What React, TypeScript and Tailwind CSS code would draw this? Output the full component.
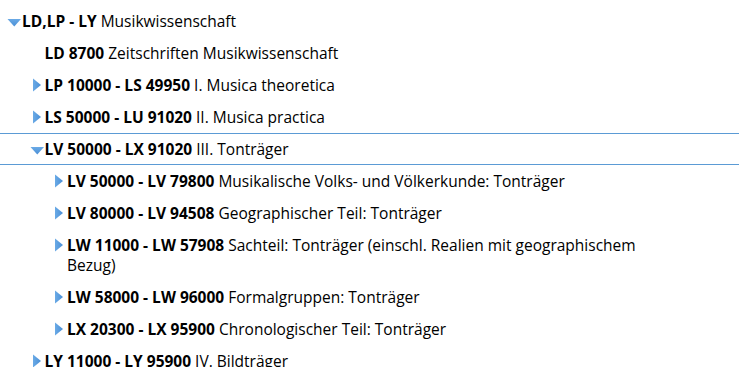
import React from "react";

type Node = {
  code: string;
  label: string;
  state: "open" | "closed" | "leaf";
  selected?: boolean;
  children?: Node[];
};

const tree: Node = {
  code: "LD,LP - LY",
  label: "Musikwissenschaft",
  state: "open",
  children: [
    { code: "LD 8700", label: "Zeitschriften Musikwissenschaft", state: "leaf" },
    { code: "LP 10000 - LS 49950", label: "I. Musica theoretica", state: "closed" },
    { code: "LS 50000 - LU 91020", label: "II. Musica practica", state: "closed" },
    {
      code: "LV 50000 - LX 91020",
      label: "III. Tonträger",
      state: "open",
      selected: true,
      children: [
        { code: "LV 50000 - LV 79800", label: "Musikalische Volks- und Völkerkunde: Tonträger", state: "closed" },
        { code: "LV 80000 - LV 94508", label: "Geographischer Teil: Tonträger", state: "closed" },
        {
          code: "LW 11000 - LW 57908",
          label: "Sachteil: Tonträger (einschl. Realien mit geographischem Bezug)",
          state: "closed",
        },
        { code: "LW 58000 - LW 96000", label: "Formalgruppen: Tonträger", state: "closed" },
        { code: "LX 20300 - LX 95900", label: "Chronologischer Teil: Tonträger", state: "closed" },
      ],
    },
    { code: "LY 11000 - LY 95900", label: "IV. Bildträger", state: "closed" },
  ],
};

function Toggle({ state }: { state: Node["state"] }) {
  if (state === "open") {
    return (
      <svg width="22" height="20" viewBox="0 0 22 20" className="shrink-0">
        <defs>
          <linearGradient id="gd" x1="0" y1="0" x2="0" y2="1">
            <stop offset="0" stopColor="#6aaae6" />
            <stop offset="1" stopColor="#4a8fd6" />
          </linearGradient>
        </defs>
        <polygon points="7.5,8 21,8 14.25,15.5" fill="url(#gd)" />
      </svg>
    );
  }
  if (state === "closed") {
    return (
      <svg width="22" height="20" viewBox="0 0 22 20" className="shrink-0">
        <defs>
          <linearGradient id="gr" x1="0" y1="0" x2="1" y2="0">
            <stop offset="0" stopColor="#6aaae6" />
            <stop offset="1" stopColor="#4a8fd6" />
          </linearGradient>
        </defs>
        <polygon points="10,3.5 18,10 10,16.5" fill="url(#gr)" />
      </svg>
    );
  }
  return <span className="w-[22px] shrink-0" />;
}

function Row({ node, level }: { node: Node; level: number }) {
  return (
    <li>
      <div
        className={
          node.selected
            ? "flex items-start border-y border-[#5b9bd5] py-[5px]"
            : "flex items-start py-[6px]"
        }
        style={{ paddingLeft: level * 22.5 }}
      >
        <Toggle state={node.state} />
        <div className="max-w-[600px] text-[15.5px] leading-[20px] text-black">
          <span className="font-bold">{node.code}</span> {node.label}
        </div>
      </div>
      {node.children && (
        <ul>
          {node.children.map((c) => (
            <Row key={c.code} node={c} level={level + 1} />
          ))}
        </ul>
      )}
    </li>
  );
}

export default function App() {
  return (
    <div
      className="h-[367px] w-[739px] overflow-hidden bg-white pt-[5px]"
      style={{ fontFamily: '"Open Sans", "Liberation Sans", sans-serif' }}
    >
      <ul>
        <Row node={tree} level={0} />
      </ul>
    </div>
  );
}
